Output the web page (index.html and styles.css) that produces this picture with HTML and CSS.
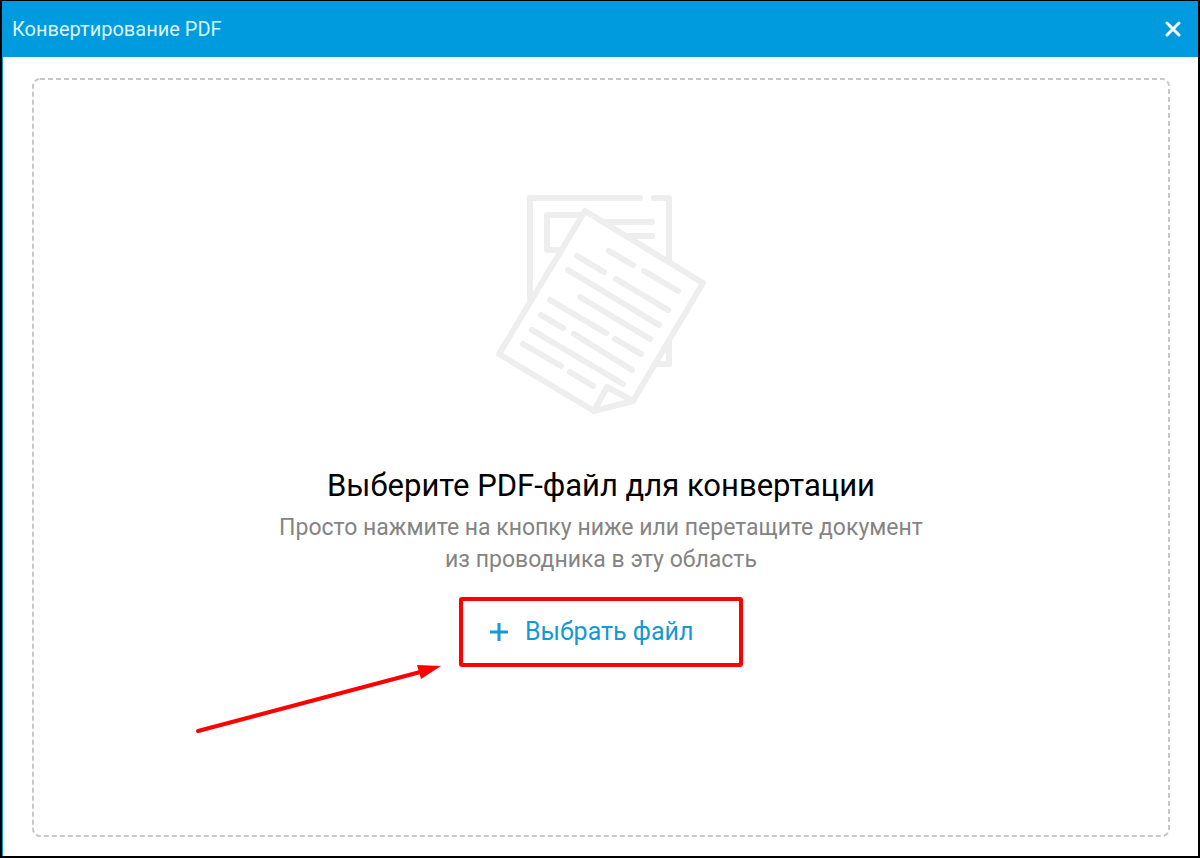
FILE: index.html
```html
<!DOCTYPE html>
<html lang="ru">
<head>
<meta charset="utf-8">
<meta name="viewport" content="width=device-width, initial-scale=1">
<title>Конвертирование PDF</title>
<link rel="stylesheet" href="styles.css">
</head>
<body>
<div class="window">
  <header class="titlebar">
    <h1 class="titlebar-text">Конвертирование PDF</h1>
    <button class="close" type="button" aria-label="Закрыть">
      <svg width="16" height="16" viewBox="0 0 16 16" aria-hidden="true"><path d="M2 2L14 14M14 2L2 14"/></svg>
    </button>
  </header>
  <main class="content">
    <section class="dropzone">
      <svg class="dropzone-outline" aria-hidden="true"><rect class="outline-rect" x="1" y="1" rx="7"/></svg>
      <svg class="documents" width="220" height="230" viewBox="491 190 220 230" aria-hidden="true">
        <path d="M640 198H530V306M654 198H669V262M669 334V364H654"/>
        <path d="M580 215H547V250H562M600 222H652M624 236H652"/>
        <path class="sheet" d="M585 211L703 283L633 401L594 411L499 354Z"/>
        <path d="M594 411L607 387L633 401"/>
        <path d="M609 251L633 265M644 271L678 291M577 256L604 272M616 279L668 310M568 270L659 325M580 297L650 339M550 300L606 333M615 339L641 354M541 315L563 328M574 334L632 370M532 330L623 384M523 344L561 366M570 372L593 386"/>
      </svg>
      <h2 class="heading">Выберите PDF-файл для конвертации</h2>
      <p class="hint">Просто нажмите на кнопку ниже или перетащите документ<br>из проводника в эту область</p>
      <div class="action">
        <button class="choose" type="button">
          <svg width="20" height="20" viewBox="0 0 20 20" aria-hidden="true"><path d="M10 1V19M1 10H19"/></svg>
          <span>Выбрать файл</span>
        </button>
        <svg class="arrow" width="248" height="72" viewBox="194 664 248 72" aria-hidden="true">
          <path class="arrow-line" d="M198 731L424 671"/>
          <path class="arrow-head" d="M417 665L441 666L421 679Z"/>
        </svg>
      </div>
    </section>
  </main>
</div>
</body>
</html>
```
FILE: styles.css
```css
* {
  box-sizing: border-box;
}

body {
  margin: 0;
  font-family: Roboto, "Liberation Sans", sans-serif;
  background: #fff;
}

.window {
  display: flex;
  flex-direction: column;
  min-height: 100vh;
  border: 2px solid #000;
  border-top-width: 1px;
}

.titlebar {
  display: flex;
  align-items: center;
  justify-content: space-between;
  height: 56px;
  padding: 0 15px 0 10px;
  background: #009bdf;
}

.titlebar-text {
  margin: 0;
  font-size: 20px;
  line-height: 24px;
  font-weight: 400;
  color: #d9f6ff;
}

.close {
  display: flex;
  padding: 2px;
  border: 0;
  background: none;
}

.close path {
  fill: none;
  stroke: #fff;
  stroke-width: 3;
  stroke-linecap: round;
}

.content {
  display: flex;
  flex: 1;
  padding: 21px 28px 19px 29px;
  border-left: 1px solid #009bdf;
}

.dropzone {
  position: relative;
  display: flex;
  flex: 1;
  flex-direction: column;
  align-items: center;
  padding: 112px 16px 0;
}

.dropzone-outline {
  position: absolute;
  inset: 0;
  width: 100%;
  height: 100%;
}

.outline-rect {
  width: calc(100% - 2px);
  height: calc(100% - 2px);
  fill: none;
  stroke: #c8c8c8;
  stroke-width: 2;
  stroke-dasharray: 5 3;
}

.documents {
  fill: none;
  stroke: #eee;
  stroke-width: 6;
  stroke-linecap: round;
  stroke-linejoin: round;
}

.sheet {
  fill: #fff;
}

.heading {
  margin: 48px 0 0;
  font-size: 31px;
  line-height: 36px;
  font-weight: 400;
  color: #000;
}

.hint {
  margin: 8px 0 0;
  font-size: 23px;
  line-height: 32px;
  text-align: center;
  color: #848484;
}

.action {
  position: relative;
  margin-top: 21px;
}

.choose {
  display: flex;
  align-items: center;
  gap: 16px;
  width: 284px;
  height: 70px;
  padding: 0 26px;
  border: 4px solid #f00;
  border-radius: 3px;
  background: none;
  font-family: inherit;
  font-size: 25px;
  line-height: 32px;
  color: #1299d6;
}

.choose path {
  fill: none;
  stroke: #1299d6;
  stroke-width: 3;
}

.arrow {
  position: absolute;
  top: 67px;
  right: calc(100% + 17px);
}

.arrow-line {
  fill: none;
  stroke: #f00;
  stroke-width: 4;
  stroke-linecap: round;
}

.arrow-head {
  fill: #f00;
}
```
